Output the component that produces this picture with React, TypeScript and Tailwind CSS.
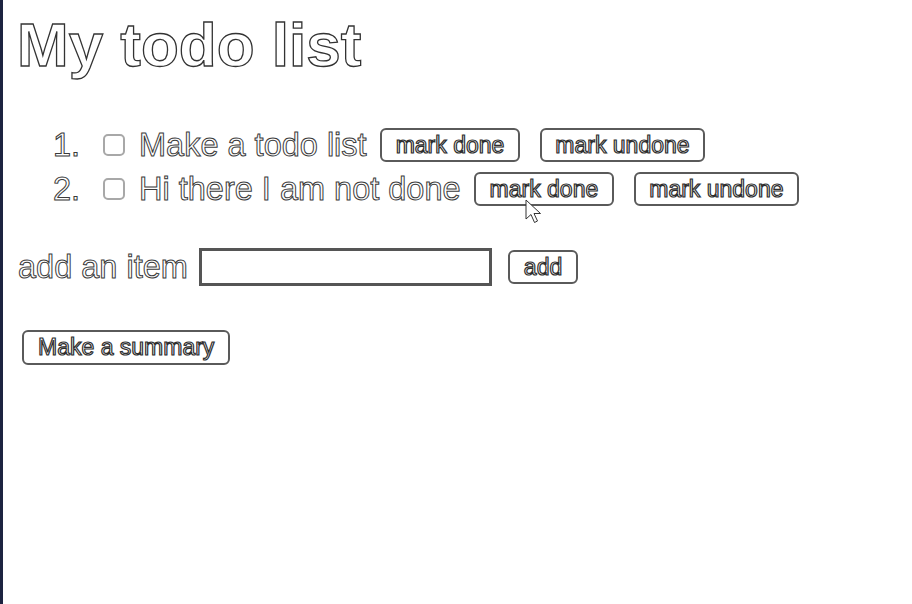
import { useState } from 'react'

// Hollow glyphs: the capture shows text as thin dark outlines on white
const OUTLINE = 'text-white [-webkit-text-stroke:1px_#3b3b3b]'

type Todo = { id: number; text: string; done: boolean }

function Btn({ children, className = '' }: { children: React.ReactNode; className?: string }) {
  return (
    <button
      className={`h-[34px] px-[13px] rounded-[6px] border-2 border-[#5a5a5a] bg-white text-[23px] leading-none text-white [-webkit-text-stroke:1.2px_#2e2e2e] ${className}`}
    >
      {children}
    </button>
  )
}

export default function App() {
  const [todos] = useState<Todo[]>([
    { id: 1, text: 'Make a todo list', done: false },
    { id: 2, text: 'Hi there I am not done', done: false },
  ])

  return (
    <div className="relative h-[604px] w-full bg-white border-l-[3px] border-[#1c2340] pl-[14px] font-['Liberation_Sans',Arial,sans-serif]">
      <h1 className="pt-[10px] text-[62px] font-bold leading-[70px] text-white [-webkit-text-stroke:1.3px_#333]">My todo list</h1>

      <ol className="mt-[43px]">
        {todos.map((t, i) => (
          <li key={t.id} className="flex items-center h-[44px]">
            <span className={`w-[63px] text-right text-[32.5px] ${OUTLINE}`}>{i + 1}.</span>
            <span className="ml-[23px] w-[22px] h-[22px] rounded-[5px] border-2 border-[#a8a8a8] bg-white" />
            <span className={`ml-[14px] text-[32.5px] ${OUTLINE}`}>{t.text}</span>
            <Btn className="ml-[13px] px-[14px]">mark done</Btn>
            <Btn className="ml-[20px]">mark undone</Btn>
          </li>
        ))}
      </ol>

      <div className="mt-[37px] flex items-center h-[38px]">
        <span className={`ml-[1px] text-[32.5px] ${OUTLINE}`}>add an item</span>
        <input className="ml-[11px] w-[293px] h-[38px] border-[3px] border-[#555] bg-white outline-none" />
        <Btn className="ml-[16px] h-[33px] px-[14px]">add</Btn>
      </div>

      <div className="mt-[44px] pl-[5px]">
        <Btn className="h-[35px] px-[14px]">Make a summary</Btn>
      </div>

      {/* mouse pointer left over the second "mark done" */}
      <svg className="absolute left-[522px] top-[199px]" width="18" height="26" viewBox="0 0 18 26">
        <path d="M1 1 L1 20 L6 15.5 L9.5 23.5 L12.5 22 L9 14.5 L15.5 14.5 Z" fill="white" stroke="#333" strokeWidth="1" />
      </svg>
    </div>
  )
}
